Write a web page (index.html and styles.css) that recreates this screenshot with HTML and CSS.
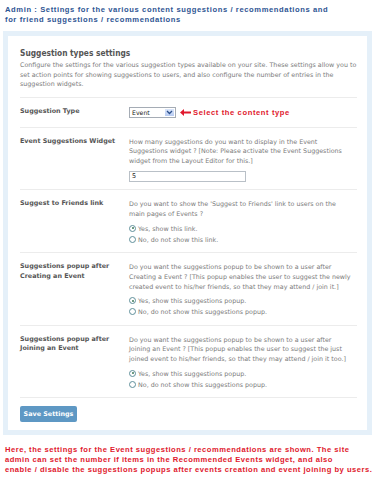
FILE: index.html
```html
<!DOCTYPE html>
<html>
<head>
<meta charset="utf-8">
<link rel="stylesheet" href="styles.css">
</head>
<body>
<h1 class="page-title">Admin : Settings for the various content suggestions / recommendations and<br>for friend suggestions / recommendations</h1>
<div class="panel">
  <div class="panel-inner">
    <h2 class="heading">Suggestion types settings</h2>
    <p class="intro">Configure the settings for the various suggestion types available on your site. These settings allow you to<br>set action points for showing suggestions to users, and also configure the number of entries in the<br>suggestion widgets.</p>

    <div class="row row-type">
      <div class="label">Suggestion Type</div>
      <div class="field inline">
        <div class="select"><span class="sel-text">Event</span><span class="sel-btn"><svg width="7" height="5" viewBox="0 0 7 5"><path d="M1 1 L3.5 3.5 L6 1" fill="none" stroke="#2b4f8c" stroke-width="1.3"/></svg></span></div>
        <svg class="arrow" width="11" height="7" viewBox="0 0 11 7"><path d="M0 3.5 L4 0 L4 2.5 L11 2.5 L11 4.5 L4 4.5 L4 7 Z" fill="#e0182d"/></svg>
        <span class="note">Select the content type</span>
      </div>
    </div>

    <div class="row">
      <div class="label">Event Suggestions Widget</div>
      <div class="field">
        <p class="desc">How many suggestions do you want to display in the Event<br>Suggestions widget ? [Note: Please activate the Event Suggestions<br>widget from the Layout Editor for this.]</p>
        <div class="text-input">5</div>
      </div>
    </div>

    <div class="row">
      <div class="label">Suggest to Friends link</div>
      <div class="field">
        <p class="desc">Do you want to show the 'Suggest to Friends' link to users on the<br>main pages of Events ?</p>
        <div class="radio"><span class="dot checked"></span>Yes, show this link.</div>
        <div class="radio"><span class="dot"></span>No, do not show this link.</div>
      </div>
    </div>

    <div class="row">
      <div class="label">Suggestions popup after<br>Creating an Event</div>
      <div class="field">
        <p class="desc">Do you want the suggestions popup to be shown to a user after<br>Creating a Event ? [This popup enables the user to suggest the newly<br>created event to his/her friends, so that they may attend / join it.]</p>
        <div class="radio"><span class="dot checked"></span>Yes, show this suggestions popup.</div>
        <div class="radio"><span class="dot"></span>No, do not show this suggestions popup.</div>
      </div>
    </div>

    <div class="row">
      <div class="label">Suggestions popup after<br>Joining an Event</div>
      <div class="field">
        <p class="desc">Do you want the suggestions popup to be shown to a user after<br>Joining an Event ? [This popup enables the user to suggest the just<br>joined event to his/her friends, so that they may attend / join it too.]</p>
        <div class="radio"><span class="dot checked"></span>Yes, show this suggestions popup.</div>
        <div class="radio"><span class="dot"></span>No, do not show this suggestions popup.</div>
      </div>
    </div>

    <div class="actions">
      <button class="save-btn">Save Settings</button>
    </div>
  </div>
</div>
<p class="footnote">Here, the settings for the Event suggestions / recommendations are shown. The site<br>admin can set the number if items in the Recommended Events widget, and also<br>enable / disable the suggestions popups after events creation and event joining by users.</p>
</body>
</html>
```

FILE: styles.css
```css
html, body {
  margin: 0;
  padding: 0;
  background: #ffffff;
  overflow: hidden;
}
body {
  width: 377px;
  font-family: "DejaVu Sans", Verdana, sans-serif;
}
.page-title {
  margin: 0;
  padding: 5px 0 0 5px;
  font-family: "Liberation Sans", Arial, sans-serif;
  font-size: 7.6px;
  line-height: 10px;
  font-weight: bold;
  letter-spacing: 0.6px;
  color: #2e5593;
  white-space: nowrap;
}
.panel {
  margin: 6px 5px 0 3px;
  border: 5px solid #e5f0f9;
}
.panel-inner {
  background: #ffffff;
  padding: 11px 10px 8px 12px;
}
.heading {
  margin: 0;
  font-family: "DejaVu Sans Condensed", "Liberation Sans", sans-serif;
  font-size: 8.3px;
  line-height: 12px;
  font-weight: bold;
  color: #555555;
}
.intro, .desc {
  margin: 0;
  font-size: 6.35px;
  line-height: 9.7px;
  color: #7c7c7c;
  white-space: nowrap;
}
.intro {
  margin-top: 1px;
  padding-bottom: 8px;
  border-bottom: 1px solid #ececec;
}
.row {
  display: grid;
  grid-template-columns: 109px 1fr;
  padding: 9px 0 7.5px;
  border-bottom: 1px solid #ececec;
}
.row-type {
  padding: 9px 0 8.5px;
}
.label {
  font-size: 6.4px;
  line-height: 9.6px;
  font-weight: bold;
  color: #555555;
  white-space: nowrap;
}
.field.inline {
  display: flex;
  align-items: center;
  height: 11px;
}
.select {
  display: flex;
  width: 47px;
  height: 11px;
  box-sizing: border-box;
  border: 1px solid #a5acb5;
  background: #fff;
}
.sel-text {
  flex: 1;
  font-size: 6.2px;
  line-height: 9px;
  padding-left: 2px;
  color: #222;
}
.sel-btn {
  width: 11px;
  display: flex;
  align-items: center;
  justify-content: center;
  background: linear-gradient(#dbe6fa, #b7cbf2);
  border: 1px solid #fff;
  box-sizing: border-box;
}
.arrow {
  margin-left: 4px;
  display: block;
}
.note {
  margin-left: 2px;
  font-family: "Liberation Sans", Arial, sans-serif;
  font-size: 7.6px;
  font-weight: bold;
  letter-spacing: 0.6px;
  color: #e0182d;
}
.text-input {
  margin-top: 5px;
  width: 117px;
  height: 11px;
  box-sizing: border-box;
  border: 1px solid #b9c0c7;
  font-size: 6.4px;
  line-height: 9px;
  padding-left: 2px;
  color: #222;
}
.desc + .radio {
  margin-top: 4px;
}
.radio {
  display: flex;
  align-items: center;
  font-size: 6.35px;
  line-height: 11px;
  color: #7c7c7c;
  white-space: nowrap;
}
.dot {
  width: 7px;
  height: 7px;
  box-sizing: border-box;
  border: 1px solid #5f8f9a;
  border-radius: 50%;
  margin-right: 2px;
  position: relative;
  background: #fff;
}
.dot.checked::after {
  content: "";
  position: absolute;
  left: 1.5px;
  top: 1.5px;
  width: 2px;
  height: 2px;
  border-radius: 50%;
  background: #3f7a5a;
}
.actions {
  padding-top: 8px;
}
.save-btn {
  display: block;
  width: 57px;
  height: 16px;
  padding: 0;
  border: none;
  border-radius: 2px;
  background: #5e98c4;
  color: #ffffff;
  font-family: "DejaVu Sans", Verdana, sans-serif;
  font-size: 6.4px;
  font-weight: bold;
}
.footnote {
  margin: 10px 0 0 5px;
  font-family: "Liberation Sans", Arial, sans-serif;
  font-size: 7.6px;
  line-height: 9.8px;
  font-weight: bold;
  letter-spacing: 0.5px;
  color: #e0182d;
  white-space: nowrap;
}
```
